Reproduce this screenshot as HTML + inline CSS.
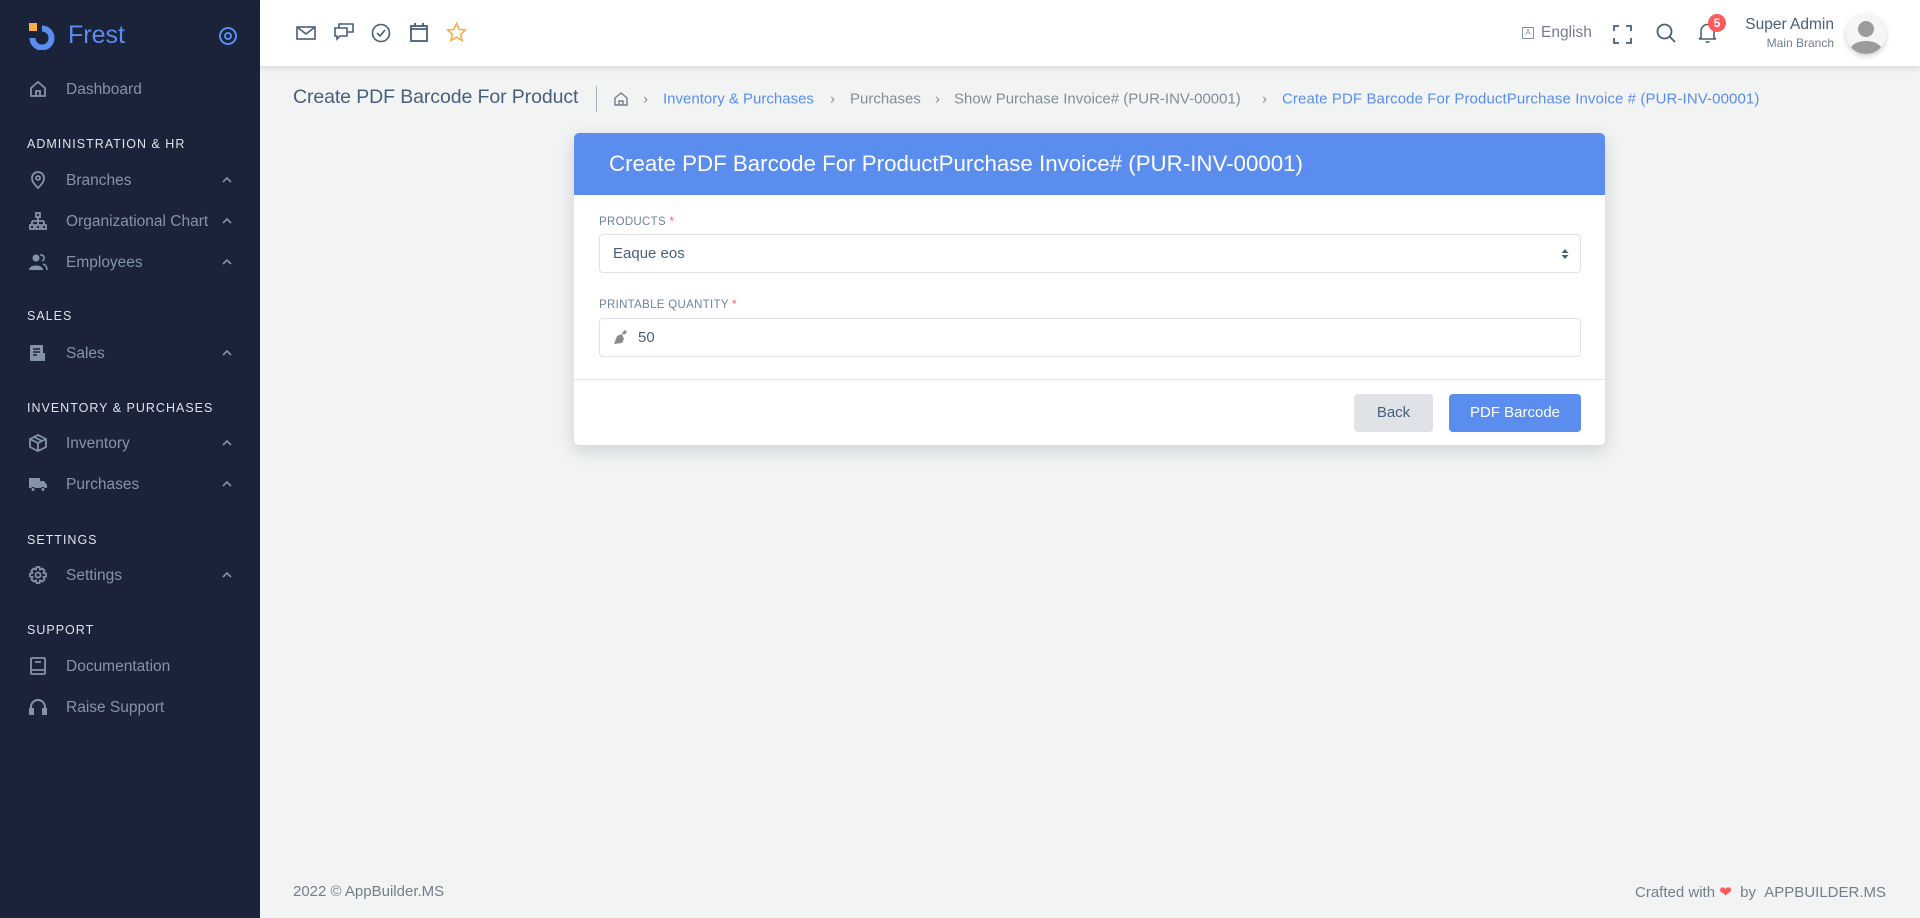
<!DOCTYPE html>
<html><head><meta charset="utf-8"><style>
*{box-sizing:border-box;margin:0;padding:0}
body{width:1920px;height:918px;overflow:hidden;background:#f2f4f4;font-family:"Liberation Sans",sans-serif;position:relative;color:#475f7b}
.sb{position:absolute;left:0;top:0;width:260px;height:918px;background:#1a233a}
.a{position:absolute}
.nav{position:absolute;left:66px;font-size:15.5px;color:#8494a7;transform:translateY(-50%);margin-top:1px}
.sec{position:absolute;left:27px;font-size:12.5px;color:#dfe3e7;letter-spacing:1px;transform:translateY(-50%);margin-top:1px}
.ic{position:absolute;left:28px;width:20px;height:20px;transform:translateY(-50%)}
.chev{position:absolute;left:222px;width:10px;height:8px;transform:translateY(-50%)}
.top{position:absolute;left:260px;top:0;width:1660px;height:66px;background:#fff;box-shadow:0 2px 6px rgba(0,0,0,.12)}
.bc{position:absolute;top:99px;transform:translateY(-50%);font-size:15px;color:#828d99}
.card{position:absolute;left:574px;top:133px;width:1031px;height:312px;background:#fff;border-radius:5px;box-shadow:0 6px 18px rgba(25,42,70,.18);overflow:hidden}
.ch{height:62px;background:#5a8dee;color:#fff;font-size:22.3px;padding:18px 0 0 35px}
.lbl{position:absolute;left:25px;font-size:11.5px;color:#6e82a0;letter-spacing:.3px}
.lbl b{color:#ff5b5c;font-weight:normal}
.inp{position:absolute;left:25px;width:982px;height:39px;border:1px solid #dfe3e7;border-radius:4px;font-size:15px;color:#475f7b}
</style></head><body>
<div class="sb">
 <svg class="a" style="left:29px;top:23px" width="27" height="27" viewBox="0 0 27 27"><rect x="0" y="0" width="8" height="8" fill="#fdac41"/><path d="M13 5.5 A9.5 9.5 0 1 1 3.5 15" fill="none" stroke="#5a8dee" stroke-width="6"/></svg>
 <div class="a" style="left:68px;top:21px;font-size:25px;color:#5a8dee">Frest</div>
 <svg class="a" style="left:218px;top:26px" width="20" height="20" viewBox="0 0 20 20"><circle cx="10" cy="10" r="8" fill="none" stroke="#5a8dee" stroke-width="2"/><circle cx="10" cy="10" r="3" fill="none" stroke="#5a8dee" stroke-width="2"/></svg>
 <svg class="ic" style="top:89px" viewBox="0 0 20 20" fill="none" stroke="#8494a7" stroke-width="1.8"><path d="M3 9 L10 3 L17 9 V17 H3 Z M8 17 V12 H12 V17"/></svg>
 <div class="nav" style="top:89px">Dashboard</div>
 <div class="sec" style="top:143px">ADMINISTRATION &amp; HR</div>
 <svg class="ic" style="top:180px" viewBox="0 0 20 20" fill="none" stroke="#8494a7" stroke-width="1.8"><path d="M10 18 C4 12 4 10 4 8 A6 6 0 0 1 16 8 C16 10 16 12 10 18Z"/><circle cx="10" cy="8" r="2"/></svg>
 <div class="nav" style="top:180px">Branches</div>
 <svg class="ic" style="top:221px" viewBox="0 0 20 20" fill="none" stroke="#8494a7" stroke-width="1.8"><rect x="8" y="2" width="4" height="4"/><path d="M10 6V10M4 10H16M4 10V13M10 10V13M16 10V13"/><rect x="2" y="14" width="4" height="4"/><rect x="8" y="14" width="4" height="4"/><rect x="14" y="14" width="4" height="4"/></svg>
 <div class="nav" style="top:221px">Organizational Chart</div>
 <svg class="ic" style="top:262px" viewBox="0 0 20 20" fill="#8494a7"><circle cx="8" cy="6" r="3.5"/><path d="M1 18 C1 12 15 12 15 18Z"/><path d="M12 3 A3 3 0 0 1 14 9 M15 12 C18 13 19 15 19 18" fill="none" stroke="#8494a7" stroke-width="1.5"/></svg>
 <div class="nav" style="top:262px">Employees</div>
 <div class="sec" style="top:315px">SALES</div>
 <svg class="ic" style="top:353px" viewBox="0 0 20 20" fill="#8494a7"><rect x="2" y="2" width="13" height="16" rx="1"/><path d="M5 6H12M5 9H12M5 12H9" stroke="#1a233a" stroke-width="1.5"/><path d="M16 10V18" stroke="#8494a7" stroke-width="2"/></svg>
 <div class="nav" style="top:353px">Sales</div>
 <div class="sec" style="top:407px">INVENTORY &amp; PURCHASES</div>
 <svg class="ic" style="top:443px" viewBox="0 0 20 20" fill="none" stroke="#8494a7" stroke-width="1.8"><path d="M10 2 L18 6 V14 L10 18 L2 14 V6 Z M2 6 L10 10 L18 6 M10 10 V18 M6 4 L14 8"/></svg>
 <div class="nav" style="top:443px">Inventory</div>
 <svg class="ic" style="top:484px" viewBox="0 0 20 20" fill="#8494a7"><rect x="1" y="4" width="11" height="10"/><path d="M12 7H16L19 11V14H12Z"/><circle cx="5" cy="15.5" r="2" stroke="#1a233a"/><circle cx="15" cy="15.5" r="2" stroke="#1a233a"/></svg>
 <div class="nav" style="top:484px">Purchases</div>
 <div class="sec" style="top:539px">SETTINGS</div>
 <svg class="ic" style="top:575px" viewBox="0 0 20 20" fill="none" stroke="#8494a7" stroke-width="1.8"><path d="M8.5 2H11.5L12 4.5L14.5 3.5L16.5 5.5L15.5 8L18 8.5V11.5L15.5 12L16.5 14.5L14.5 16.5L12 15.5L11.5 18H8.5L8 15.5L5.5 16.5L3.5 14.5L4.5 12L2 11.5V8.5L4.5 8L3.5 5.5L5.5 3.5L8 4.5Z"/><circle cx="10" cy="10" r="2.5"/></svg>
 <div class="nav" style="top:575px">Settings</div>
 <div class="sec" style="top:629px">SUPPORT</div>
 <svg class="ic" style="top:666px" viewBox="0 0 20 20" fill="none" stroke="#8494a7" stroke-width="1.8"><rect x="3" y="2" width="14" height="16" rx="1"/><path d="M3 14H17M7 6H13"/></svg>
 <div class="nav" style="top:666px">Documentation</div>
 <svg class="ic" style="top:707px" viewBox="0 0 20 20" fill="none" stroke="#8494a7" stroke-width="2"><path d="M3 15V10A7 7 0 0 1 17 10V15"/><rect x="2" y="12" width="3" height="5" fill="#8494a7"/><rect x="15" y="12" width="3" height="5" fill="#8494a7"/></svg>
 <div class="nav" style="top:707px">Raise Support</div>
 <svg class="chev" style="top:180px" viewBox="0 0 10 8" fill="none" stroke="#8494a7" stroke-width="1.6"><path d="M1 6L5 2L9 6"/></svg>
 <svg class="chev" style="top:221px" viewBox="0 0 10 8" fill="none" stroke="#8494a7" stroke-width="1.6"><path d="M1 6L5 2L9 6"/></svg>
 <svg class="chev" style="top:262px" viewBox="0 0 10 8" fill="none" stroke="#8494a7" stroke-width="1.6"><path d="M1 6L5 2L9 6"/></svg>
 <svg class="chev" style="top:353px" viewBox="0 0 10 8" fill="none" stroke="#8494a7" stroke-width="1.6"><path d="M1 6L5 2L9 6"/></svg>
 <svg class="chev" style="top:443px" viewBox="0 0 10 8" fill="none" stroke="#8494a7" stroke-width="1.6"><path d="M1 6L5 2L9 6"/></svg>
 <svg class="chev" style="top:484px" viewBox="0 0 10 8" fill="none" stroke="#8494a7" stroke-width="1.6"><path d="M1 6L5 2L9 6"/></svg>
 <svg class="chev" style="top:575px" viewBox="0 0 10 8" fill="none" stroke="#8494a7" stroke-width="1.6"><path d="M1 6L5 2L9 6"/></svg>
</div>
<div class="top">
 <svg class="a" style="left:36px;top:23px" width="20" height="20" viewBox="0 0 20 20" fill="none" stroke="#475f7b" stroke-width="1.6"><rect x="1" y="4" width="18" height="12"/><path d="M1 4L10 11L19 4"/></svg>
 <svg class="a" style="left:74px;top:22px" width="20" height="20" viewBox="0 0 20 20" fill="none" stroke="#475f7b" stroke-width="1.6"><path d="M1 6H13V14H6L3 17V14H1Z"/><path d="M5 6V2H19V10H13"/></svg>
 <svg class="a" style="left:111px;top:23px" width="20" height="20" viewBox="0 0 20 20" fill="none" stroke="#475f7b" stroke-width="1.6"><circle cx="10" cy="10" r="8.5"/><path d="M6 10L9 13L14 7"/></svg>
 <svg class="a" style="left:150px;top:22px" width="18" height="21" viewBox="0 0 18 21" fill="none" stroke="#475f7b" stroke-width="1.8"><rect x="1" y="4" width="16" height="15"/><path d="M1 7H17M5 1V5M13 1V5"/></svg>
 <svg class="a" style="left:186px;top:22px" width="21" height="21" viewBox="0 0 21 21" fill="none" stroke="#fdac41" stroke-width="1.6"><path d="M10.5 1.5L13.2 7.4L19.5 8L14.7 12.2L16.1 18.5L10.5 15.2L4.9 18.5L6.3 12.2L1.5 8L7.8 7.4Z"/></svg>
 <div class="a" style="left:1262px;top:27px;width:12px;height:12px;border:1.3px solid #8494a7;font-size:8px;line-height:9px;text-align:center;color:#8494a7">A</div>
 <div class="a" style="left:1281px;top:24px;font-size:15.5px;color:#727e8c">English</div>
 <svg class="a" style="left:1353px;top:25px" width="19" height="19" viewBox="0 0 19 19" fill="none" stroke="#475f7b" stroke-width="1.8"><path d="M1 6V1H6M13 1H18V6M18 13V18H13M6 18H1V13"/></svg>
 <svg class="a" style="left:1396px;top:23px" width="20" height="20" viewBox="0 0 20 20" fill="none" stroke="#475f7b" stroke-width="1.8"><circle cx="8.5" cy="8.5" r="7"/><path d="M13.5 13.5L19 19"/></svg>
 <svg class="a" style="left:1438px;top:22px" width="19" height="22" viewBox="0 0 19 22" fill="none" stroke="#475f7b" stroke-width="1.6"><path d="M3 16V9A6.5 6.5 0 0 1 16 9V16L18 17H1Z M7.5 20H11.5"/></svg>
 <div class="a" style="left:1448px;top:14px;width:18px;height:18px;border-radius:50%;background:#ff5b5c;color:#fff;font-size:12px;font-weight:bold;text-align:center;line-height:18px">5</div>
 <div class="a" style="right:86px;top:16px;font-size:15.5px;color:#475f7b;text-align:right">Super Admin</div>
 <div class="a" style="right:86px;top:36px;font-size:12px;color:#727e8c;text-align:right">Main Branch</div>
 <div class="a" style="left:1586px;top:14px;width:40px;height:40px;border-radius:50%;background:#fff;box-shadow:0 2px 6px rgba(0,0,0,.2);overflow:hidden">
  <svg width="40" height="40" viewBox="0 0 40 40"><circle cx="20" cy="20" r="20" fill="#f5f5f5"/><circle cx="20" cy="15" r="8" fill="#9b9b9b"/><path d="M4 36 C6 24 34 24 36 36 L36 40 H4Z" fill="#9b9b9b"/></svg>
 </div>
</div>
<div class="a" style="left:293px;top:86px;font-size:19.5px;color:#475f7b;letter-spacing:-0.1px">Create PDF Barcode For Product</div>
<div class="a" style="left:596px;top:86px;width:1px;height:26px;background:#aab3bd"></div>
<svg class="a" style="left:613px;top:91px" width="16" height="16" viewBox="0 0 16 16" fill="none" stroke="#727e8c" stroke-width="1.4"><path d="M2 7L8 2L14 7V14H2Z M6 14V10H10V14"/></svg>
<div class="bc" style="left:643px">›</div>
<div class="bc" style="left:663px;color:#5a8dee">Inventory &amp; Purchases</div>
<div class="bc" style="left:830px">›</div>
<div class="bc" style="left:850px">Purchases</div>
<div class="bc" style="left:935px">›</div>
<div class="bc" style="left:954px">Show Purchase Invoice# (PUR-INV-00001)</div>
<div class="bc" style="left:1262px">›</div>
<div class="bc" style="left:1282px;color:#5a8dee;letter-spacing:0.1px">Create PDF Barcode For ProductPurchase Invoice # (PUR-INV-00001)</div>
<div class="card">
 <div class="ch">Create PDF Barcode For ProductPurchase Invoice# (PUR-INV-00001)</div>
 <div class="lbl" style="top:83px">PRODUCTS <b>*</b></div>
 <div class="inp" style="top:101px;padding:10px 0 0 13px">Eaque eos
  <svg class="a" style="right:11px;top:13px" width="8" height="12" viewBox="0 0 8 12" fill="#475f7b"><path d="M4 1L7.5 5H0.5Z M4 11L7.5 7H0.5Z"/></svg></div>
 <div class="lbl" style="top:166px">PRINTABLE QUANTITY <b>*</b></div>
 <div class="inp" style="top:185px;padding:10px 0 0 38px">50
  <svg class="a" style="left:13px;top:10px" width="15" height="16" viewBox="0 0 15 16" fill="#8a8a8a"><path d="M1 15L4 7L9 5L11 10L9 14Z"/><path d="M9 4L12 1L14 3L11 6Z"/></svg></div>
 <div class="a" style="left:0;top:246px;width:1031px;height:1px;background:#dfe3e7"></div>
 <div class="a" style="left:780px;top:261px;width:79px;height:38px;background:#dfe3e7;border-radius:4px;color:#475f7b;font-size:15px;text-align:center;line-height:38px">Back</div>
 <div class="a" style="left:875px;top:261px;width:132px;height:38px;background:#5a8dee;border-radius:4px;color:#fff;font-size:15px;text-align:center;line-height:38px">PDF Barcode</div>
</div>
<div class="a" style="left:293px;top:883px;font-size:15px;color:#727e8c">2022 © AppBuilder.MS</div>
<div class="a" style="right:34px;top:883px;font-size:15px;color:#727e8c">Crafted with <span style="color:#ff5b5c">&#10084;</span> &nbsp;by &nbsp;APPBUILDER.MS</div>
</body></html>
